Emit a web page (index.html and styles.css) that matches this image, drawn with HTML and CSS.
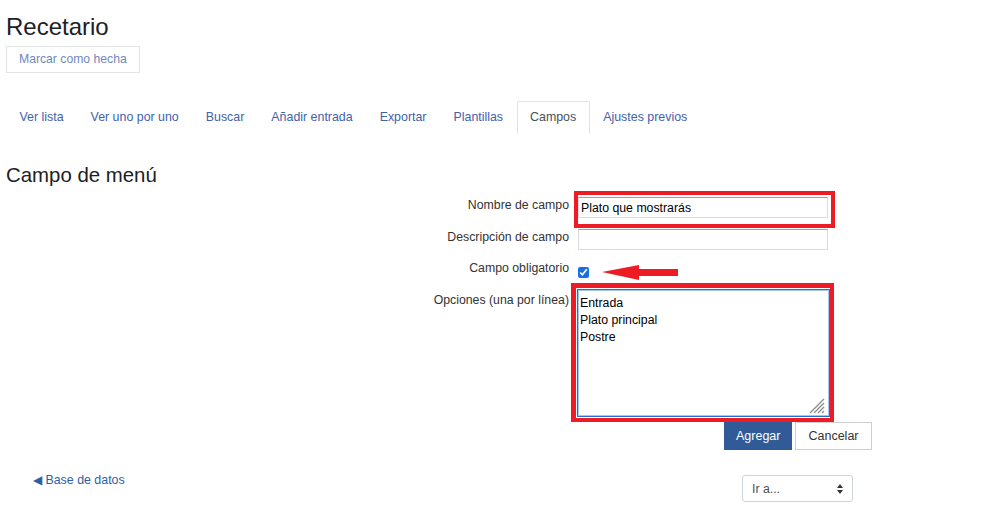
FILE: index.html
```html
<!DOCTYPE html>
<html lang="es">
<head>
    <meta charset="UTF-8">
    <title>Recetario</title>
    <link rel="stylesheet" href="styles.css">
</head>
<body>

<div class="page">
    <h1 class="title">Recetario</h1>
    <button class="btn-done">Marcar como hecha</button>

    <ul class="tabs">
        <li><a href="#">Ver lista</a></li>
        <li><a href="#">Ver uno por uno</a></li>
        <li><a href="#">Buscar</a></li>
        <li><a href="#">Añadir entrada</a></li>
        <li><a href="#">Exportar</a></li>
        <li><a href="#">Plantillas</a></li>
        <li class="active"><a href="#">Campos</a></li>
        <li><a href="#">Ajustes previos</a></li>
    </ul>

    <h2 class="section-title">Campo de menú</h2>

    <form class="field-form">
        <div class="row row-name">
            <label class="row-label">Nombre de campo</label>
            <div class="row-control">
                <input type="text" class="text-input" value="Plato que mostrarás">
                <span class="mark mark-name"></span>
            </div>
        </div>
        <div class="row row-desc">
            <label class="row-label">Descripción de campo</label>
            <div class="row-control">
                <input type="text" class="text-input">
            </div>
        </div>
        <div class="row row-required">
            <label class="row-label">Campo obligatorio</label>
            <div class="row-control check-control">
                <input type="checkbox" class="check" checked>
                <svg class="arrow" width="76" height="17" viewBox="0 0 76 17">
                    <polygon points="0,8 37,1 37,5 76,5 76,12 37,12 37,16" fill="#ed1c24"/>
                </svg>
            </div>
        </div>
        <div class="row row-options">
            <label class="row-label">Opciones (una por línea)</label>
            <div class="row-control">
                <textarea class="options">Entrada
Plato principal
Postre</textarea>
                <svg class="resizer" width="16" height="16" viewBox="0 0 16 16">
                    <line x1="1" y1="15" x2="15" y2="1" stroke="#8a8a8a" stroke-width="1.3"/>
                    <line x1="5" y1="15" x2="15" y2="5" stroke="#8a8a8a" stroke-width="1.3"/>
                    <line x1="9" y1="15" x2="15" y2="9" stroke="#8a8a8a" stroke-width="1.3"/>
                    <line x1="13" y1="15" x2="15" y2="13" stroke="#8a8a8a" stroke-width="1.3"/>
                </svg>
                <span class="mark mark-options"></span>
            </div>
        </div>
        <div class="row row-buttons">
            <span></span>
            <div class="buttons">
                <button type="button" class="btn-primary">Agregar</button>
                <button type="button" class="btn-cancel">Cancelar</button>
            </div>
        </div>
    </form>

    <div class="activity-nav">
        <a href="#" class="back-link">&#9664; Base de datos</a>
        <span class="jump">
            <select class="jump-select">
                <option>Ir a...</option>
            </select>
            <svg class="jump-caret" width="6" height="10" viewBox="0 0 6 10">
                <polygon points="0,4 3,0 6,4" fill="#333"/>
                <polygon points="0,6 3,10 6,6" fill="#333"/>
            </svg>
        </span>
    </div>
</div>

</body>
</html>
```

FILE: styles.css
```css
body {
    margin: 0;
    font-family: "Liberation Sans", Arial, sans-serif;
    background-color: #fff;
    color: #333;
}
.page {
    padding: 0 6px;
}
.title {
    margin: 12px 0 0 0;
    font-size: 24px;
    line-height: 29px;
    font-weight: normal;
    color: #1d2125;
}
.btn-done {
    display: block;
    margin-top: 5px;
    padding: 5px 12px;
    font-family: inherit;
    font-size: 12.2px;
    line-height: 15px;
    color: #6f89bd;
    background-color: #fff;
    border: 1px solid #e1e3e6;
    border-radius: 0;
}
.tabs {
    display: flex;
    list-style: none;
    margin: 28px 0 0 0;
    padding: 0;
}
.tabs a {
    display: block;
    padding: 8px 12.5px 8px;
    font-size: 12.4px;
    line-height: 15px;
    color: #3f62ab;
    text-decoration: none;
    border: 1px solid transparent;
    border-radius: 2px 2px 0 0;
}
.tabs .active a {
    color: #495057;
    border-color: #dee2e6 #dee2e6 #fff;
}
.section-title {
    margin: 29px 0 0 0;
    font-size: 20.4px;
    line-height: 24px;
    font-weight: normal;
    color: #1d2125;
}
.field-form {
    margin-top: 10px;
}
.row {
    display: grid;
    grid-template-columns: 563px 1fr;
    column-gap: 9px;
    font-size: 12.3px;
    line-height: 15px;
}
.row-label {
    text-align: right;
    color: #333;
    padding-top: 1px;
}
.row-control {
    position: relative;
}
.row-desc {
    margin-top: 11px;
}
.row-required {
    margin-top: 10px;
}
.row-options {
    margin-top: 8px;
}
.row-options .row-label {
    padding-top: 4px;
}
.row-buttons {
    margin-top: 5px;
}
.text-input {
    display: block;
    box-sizing: border-box;
    width: 250px;
    height: 21px;
    margin: 0;
    padding: 2px 2px;
    font-family: inherit;
    font-size: 12.3px;
    color: #000;
    border: 1px solid #dcdcdc;
    border-top-color: #a0a0a0;
    outline: none;
}
.check-control {
    display: flex;
    align-items: center;
    padding-top: 4px;
}
.check {
    width: 11px;
    height: 11px;
    margin: 0;
    accent-color: #1a6fe0;
}
.arrow {
    display: block;
    margin-left: 13px;
}
.options {
    display: block;
    box-sizing: border-box;
    width: 253px;
    height: 128px;
    margin: 0 0 0 -1px;
    padding: 5px 2px 3px;
    font-family: inherit;
    font-size: 12.3px;
    line-height: 17px;
    color: #000;
    border: 1px solid #1f6fd8;
    box-shadow: inset 0 0 0 1px #a8c6ee;
    outline: none;
    resize: none;
}
.resizer {
    position: absolute;
    left: 231px;
    top: 109px;
    pointer-events: none;
}
.mark {
    position: absolute;
    border: 4px solid #ed1c24;
    box-sizing: border-box;
    pointer-events: none;
}
.mark-name {
    left: -4px;
    top: -6px;
    width: 261px;
    height: 37px;
}
.mark-options {
    left: -7px;
    top: -6px;
    width: 263px;
    height: 139px;
    border-width: 5px 4px 4px 5px;
}
.buttons {
    display: flex;
    gap: 3px;
    margin-left: 146px;
}
.btn-primary {
    padding: 6px 12px;
    font-family: inherit;
    font-size: 12.5px;
    line-height: 16px;
    color: #fff;
    background-color: #305b96;
    border: none;
    border-radius: 0;
}
.btn-cancel {
    padding: 5px 12px;
    font-family: inherit;
    font-size: 12.5px;
    line-height: 16px;
    color: #333;
    background-color: #fff;
    border: 1px solid #cfcfcf;
    border-radius: 0;
}
.activity-nav {
    display: grid;
    grid-template-columns: 709px 111px;
    margin-top: 23px;
    padding-left: 27px;
}
.back-link {
    font-size: 12.4px;
    line-height: 15px;
    color: #2f5ea8;
    text-decoration: none;
}
.jump {
    position: relative;
    display: block;
    margin-top: 2px;
}
.jump-select {
    display: block;
    width: 111px;
    height: 27px;
    padding: 0 9px;
    font-family: inherit;
    font-size: 12.3px;
    color: #495057;
    background-color: #fff;
    border: 1px solid #ced4da;
    border-radius: 3px;
    appearance: none;
    -webkit-appearance: none;
}
.jump-caret {
    position: absolute;
    right: 10px;
    top: 9px;
    pointer-events: none;
}
```
